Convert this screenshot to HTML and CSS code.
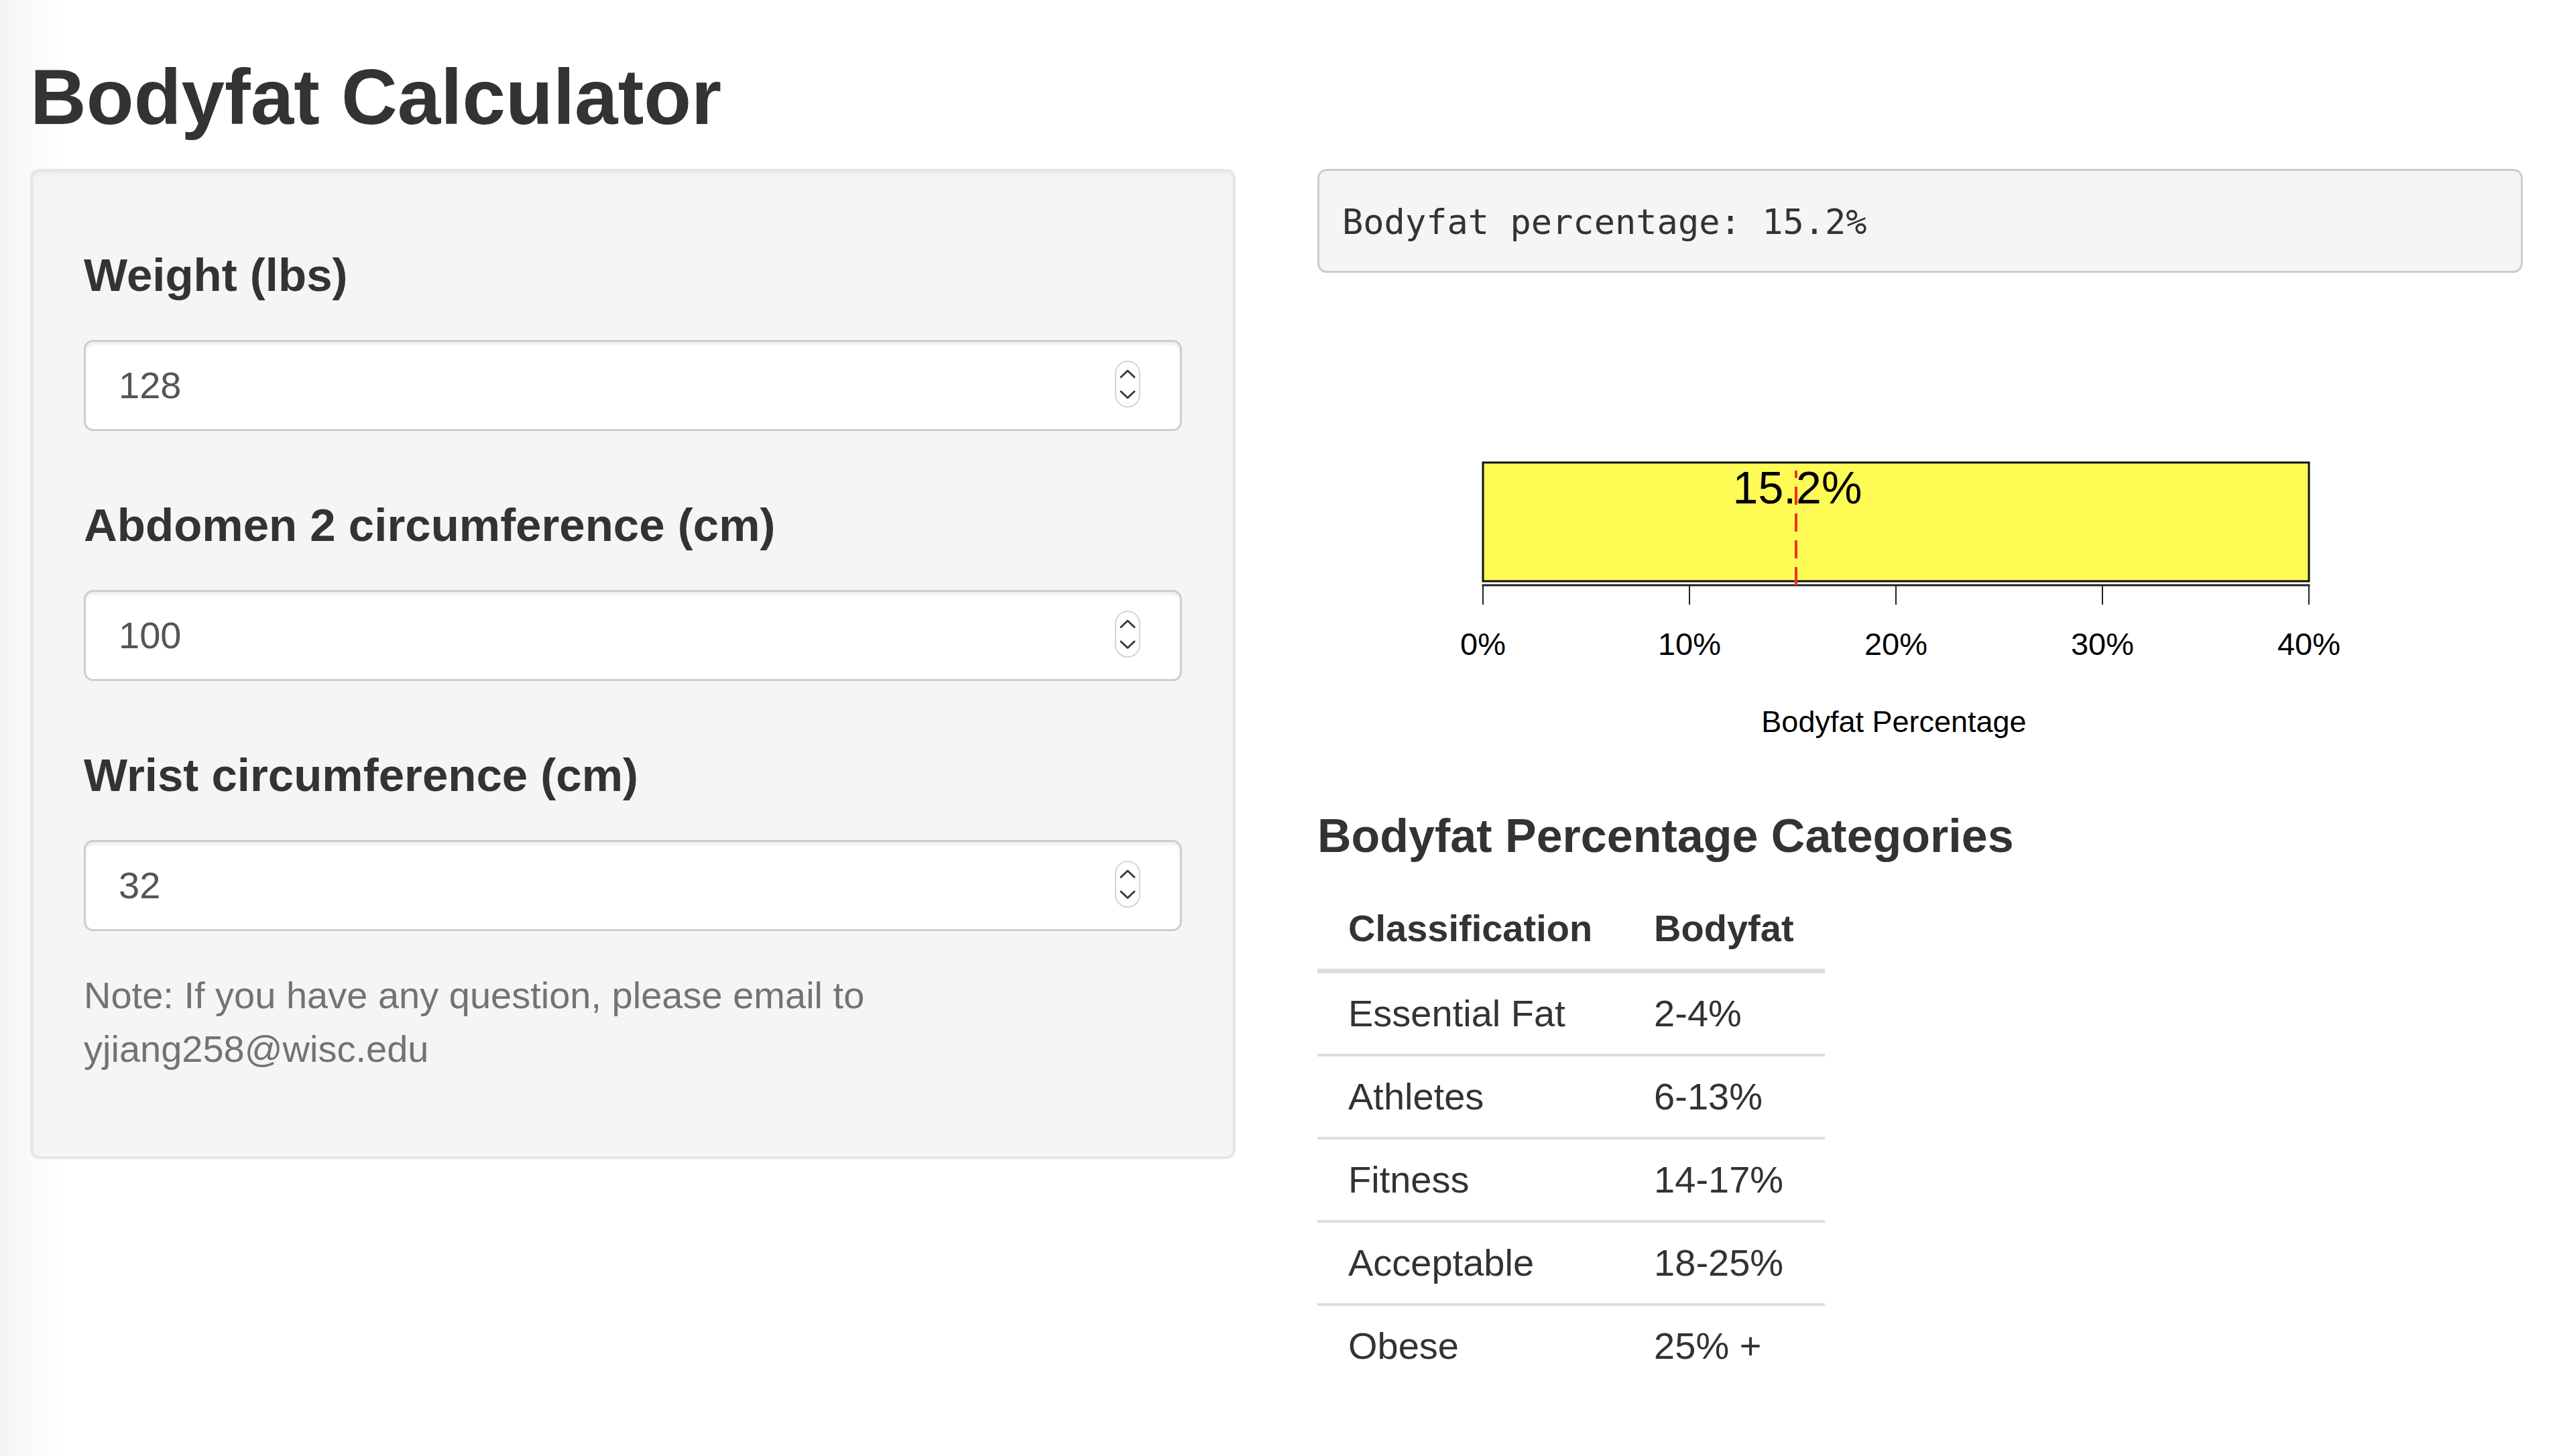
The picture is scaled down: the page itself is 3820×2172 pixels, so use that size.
FILE: index.html
```html
<!DOCTYPE html>
<html lang="en">
<head>
<meta charset="utf-8">
<title>Bodyfat Calculator</title>
<link rel="stylesheet" href="styles.css">
</head>
<body>
<div class="page">
  <h2 class="title">Bodyfat Calculator</h2>
  <div class="row">
    <div class="well">
      <div class="form-group">
        <label class="label">Weight (lbs)</label>
        <div class="form-control">
          <span class="value">128</span>
          <svg class="spinner" width="38" height="70" viewBox="0 0 38 70"><rect x="1" y="1" width="36" height="68" rx="18" ry="18" fill="#fff" stroke="#d6d6d6" stroke-width="2"/><polyline points="9,24.5 19,15 29,24.5" fill="none" stroke="#3a3a3a" stroke-width="3" stroke-linecap="round" stroke-linejoin="round"/><polyline points="9,46 19,55.5 29,46" fill="none" stroke="#3a3a3a" stroke-width="3" stroke-linecap="round" stroke-linejoin="round"/></svg>
        </div>
      </div>
      <div class="form-group">
        <label class="label">Abdomen 2 circumference (cm)</label>
        <div class="form-control">
          <span class="value">100</span>
          <svg class="spinner" width="38" height="70" viewBox="0 0 38 70"><rect x="1" y="1" width="36" height="68" rx="18" ry="18" fill="#fff" stroke="#d6d6d6" stroke-width="2"/><polyline points="9,24.5 19,15 29,24.5" fill="none" stroke="#3a3a3a" stroke-width="3" stroke-linecap="round" stroke-linejoin="round"/><polyline points="9,46 19,55.5 29,46" fill="none" stroke="#3a3a3a" stroke-width="3" stroke-linecap="round" stroke-linejoin="round"/></svg>
        </div>
      </div>
      <div class="form-group">
        <label class="label">Wrist circumference (cm)</label>
        <div class="form-control">
          <span class="value">32</span>
          <svg class="spinner" width="38" height="70" viewBox="0 0 38 70"><rect x="1" y="1" width="36" height="68" rx="18" ry="18" fill="#fff" stroke="#d6d6d6" stroke-width="2"/><polyline points="9,24.5 19,15 29,24.5" fill="none" stroke="#3a3a3a" stroke-width="3" stroke-linecap="round" stroke-linejoin="round"/><polyline points="9,46 19,55.5 29,46" fill="none" stroke="#3a3a3a" stroke-width="3" stroke-linecap="round" stroke-linejoin="round"/></svg>
        </div>
      </div>
      <p class="note">Note: If you have any question, please email to yjiang258@wisc.edu</p>
    </div>
    <div class="main">
      <pre class="output">Bodyfat percentage: 15.2%</pre>
      <svg class="plot" width="1798" height="722" viewBox="0 0 1798 722">
        <rect x="247" y="243" width="1232" height="177" fill="#fffb55" stroke="#111" stroke-width="3"/>
        <line x1="245.5" y1="426" x2="1480.5" y2="426" stroke="#222" stroke-width="3"/>
        <g stroke="#222" stroke-width="2">
          <line x1="247" y1="426" x2="247" y2="455"/>
          <line x1="555" y1="426" x2="555" y2="455"/>
          <line x1="863" y1="426" x2="863" y2="455"/>
          <line x1="1171" y1="426" x2="1171" y2="455"/>
          <line x1="1479" y1="426" x2="1479" y2="455"/>
        </g>
        <g class="tick-labels" text-anchor="middle">
          <text x="247" y="530">0%</text>
          <text x="555" y="530">10%</text>
          <text x="863" y="530">20%</text>
          <text x="1171" y="530">30%</text>
          <text x="1479" y="530">40%</text>
        </g>
        <text class="value-label" x="716" y="304" text-anchor="middle">15.2%</text>
        <line x1="714" y1="426" x2="714" y2="255" stroke="#f2301e" stroke-width="4" stroke-dasharray="27 13"/>
        <text class="axis-title" x="860" y="645" text-anchor="middle">Bodyfat Percentage</text>
      </svg>
      <h4 class="subtitle">Bodyfat Percentage Categories</h4>
      <table class="table">
        <thead>
          <tr><th>Classification</th><th>Bodyfat</th></tr>
        </thead>
        <tbody>
          <tr><td>Essential Fat</td><td>2-4%</td></tr>
          <tr><td>Athletes</td><td>6-13%</td></tr>
          <tr><td>Fitness</td><td>14-17%</td></tr>
          <tr><td>Acceptable</td><td>18-25%</td></tr>
          <tr><td>Obese</td><td>25% +</td></tr>
        </tbody>
      </table>
    </div>
  </div>
</div>
</body>
</html>
```

FILE: styles.css
```css
html, body {
  margin: 0;
  padding: 0;
}

body {
  font-family: "Liberation Sans", Arial, Helvetica, sans-serif;
  font-size: 56px;
  line-height: 80px;
  color: #333;
  background: linear-gradient(90deg, #f4f4f4 0, #fafafa 45px, #fff 90px);
  min-height: 2172px;
}

.page {
  padding: 0 57px 0 45px;
}

.title {
  margin: 80px 0 42px;
  font-size: 116px;
  line-height: 130px;
  font-weight: 700;
  color: #333;
}

.row {
  display: grid;
  grid-template-columns: 1798px 1798px;
  column-gap: 122px;
  align-items: start;
}

.well {
  background: #f5f5f5;
  border: 4px solid #e6e6e6;
  border-radius: 14px;
  padding: 76px;
  box-shadow: inset 0 4px 4px rgba(0, 0, 0, 0.04);
}

.label {
  display: block;
  margin: 40px 0 58px;
  font-size: 69px;
  line-height: 77px;
  font-weight: 700;
  color: #333;
}

.form-group + .form-group {
  margin-top: 102px;
}

.form-control {
  box-sizing: border-box;
  height: 136px;
  display: flex;
  align-items: center;
  justify-content: space-between;
  padding: 0 59px 0 49px;
  background: #fff;
  border: 3px solid #cdcdcd;
  border-radius: 14px;
  box-shadow: inset 0 4px 4px rgba(0, 0, 0, 0.075);
  color: #555;
  font-size: 56px;
}

.spinner {
  display: block;
  margin-top: -4px;
}

.note {
  margin: 56px 0 44px;
  color: #737373;
}

.output {
  margin: 0 0 40px;
  padding: 39px 34px 36px;
  border: 3px solid #cccccc;
  border-radius: 14px;
  background: #f5f5f5;
  font-family: "DejaVu Sans Mono", "Liberation Mono", monospace;
  font-size: 52px;
  line-height: 74px;
  color: #333;
  white-space: pre;
}

.plot {
  display: block;
}

.plot text {
  font-family: "Liberation Sans", Arial, sans-serif;
  fill: #000;
}

.tick-labels text {
  font-size: 47px;
}

.value-label {
  font-size: 68px;
}

.axis-title {
  font-size: 45px;
}

.subtitle {
  margin: 40px 0 39px;
  font-size: 70px;
  line-height: 77px;
  font-weight: 700;
  color: #333;
}

.table {
  border-collapse: collapse;
  border-spacing: 0;
}

.table th,
.table td {
  padding: 20px 46px;
  text-align: left;
  line-height: 80px;
  color: #333;
}

.table th {
  font-weight: 700;
  border-bottom: 7px solid #dddddd;
}

.table tbody tr + tr td {
  border-top: 4px solid #dddddd;
}
```
